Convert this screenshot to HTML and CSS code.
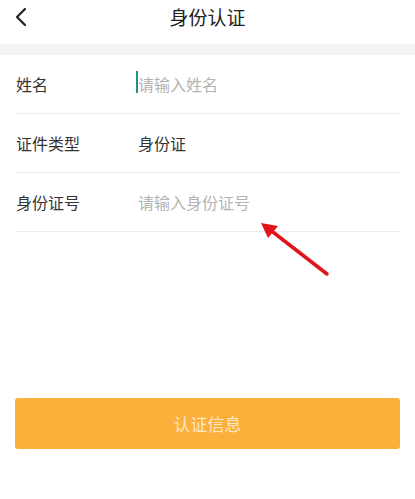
FILE: index.html
```html
<!DOCTYPE html>
<html lang="zh-CN">
<head>
<meta charset="utf-8">
<title>身份认证</title>
<link rel="stylesheet" href="styles.css">
</head>
<body>
<div class="page">
  <header class="topbar">
    <svg class="back" width="14" height="20" viewBox="0 0 14 20"><path d="M11 2 L3 10 L11 18" fill="none" stroke="#222" stroke-width="2.2" stroke-linecap="round" stroke-linejoin="round"/></svg>
    <h1 class="title">身份认证</h1>
  </header>
  <div class="band"></div>
  <div class="form">
    <div class="row">
      <span class="label">姓名</span>
      <span class="value placeholder"><span class="cursor"></span>请输入姓名</span>
    </div>
    <div class="row">
      <span class="label">证件类型</span>
      <span class="value">身份证</span>
    </div>
    <div class="row">
      <span class="label">身份证号</span>
      <span class="value placeholder">请输入身份证号</span>
    </div>
  </div>
  <div class="actions">
    <button class="submit">认证信息</button>
  </div>
  <svg class="arrow" width="80" height="64" viewBox="0 0 80 64">
    <line x1="76" y1="60" x2="18" y2="15" stroke="#e3131b" stroke-width="3.5" stroke-linecap="round"/>
    <polygon points="10,9 27,12 17,24" fill="#e3131b"/>
  </svg>
</div>
</body>
</html>
```
FILE: styles.css
```css
* { box-sizing: border-box; margin: 0; padding: 0; }
html, body { background: #fff; }
body {
  font-family: "Noto Sans CJK SC", "Noto Sans", sans-serif;
  color: #333;
}
.page {
  position: relative;
  width: 415px;
  height: 499px;
  overflow: hidden;
}
.topbar {
  position: relative;
  height: 44px;
  display: flex;
  align-items: center;
  justify-content: center;
}
.back {
  position: absolute;
  left: 14px;
  top: 7px;
}
.title {
  font-size: 19px;
  font-weight: 400;
  color: #222;
  line-height: 1;
  margin-top: -12px;
}
.band {
  height: 11px;
  background: #f4f4f4;
}
.form {
  padding: 0 15px;
}
.row {
  height: 59px;
  display: flex;
  align-items: center;
  border-bottom: 1px solid #ececec;
  font-size: 16px;
}
.label {
  width: 123px;
  padding-left: 1px;
  color: #333;
}
.value {
  display: flex;
  align-items: center;
  color: #333;
  position: relative;
}
.placeholder { color: #b3b3b3; }
.cursor {
  position: absolute;
  left: -2px;
  top: -1px;
  width: 2px;
  height: 22px;
  background: #25907f;
}
.actions {
  padding: 166px 15px 0;
}
.submit {
  width: 100%;
  height: 51px;
  border: none;
  border-radius: 3px;
  background: #fdaf3b;
  color: #fde6c3;
  font-family: "Noto Sans CJK SC", "Noto Sans", sans-serif;
  font-size: 17px;
}
.arrow {
  position: absolute;
  left: 251px;
  top: 214px;
}
```
